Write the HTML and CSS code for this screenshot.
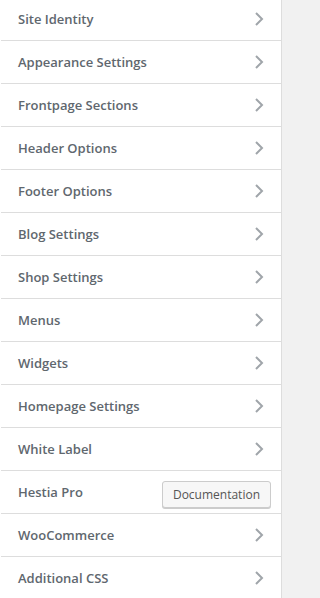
FILE: index.html
```html
<!DOCTYPE html>
<html>
<head>
<meta charset="utf-8">
<link rel="stylesheet" href="styles.css">
</head>
<body>
<div class="panel">
  <ul class="list">
    <li class="row"><span class="title">Site Identity</span><svg class="chev" viewBox="0 0 10 16"><path d="M2 2 L8 8 L2 14" /></svg></li>
    <li class="row"><span class="title">Appearance Settings</span><svg class="chev" viewBox="0 0 10 16"><path d="M2 2 L8 8 L2 14" /></svg></li>
    <li class="row"><span class="title">Frontpage Sections</span><svg class="chev" viewBox="0 0 10 16"><path d="M2 2 L8 8 L2 14" /></svg></li>
    <li class="row"><span class="title">Header Options</span><svg class="chev" viewBox="0 0 10 16"><path d="M2 2 L8 8 L2 14" /></svg></li>
    <li class="row"><span class="title">Footer Options</span><svg class="chev" viewBox="0 0 10 16"><path d="M2 2 L8 8 L2 14" /></svg></li>
    <li class="row"><span class="title">Blog Settings</span><svg class="chev" viewBox="0 0 10 16"><path d="M2 2 L8 8 L2 14" /></svg></li>
    <li class="row"><span class="title">Shop Settings</span><svg class="chev" viewBox="0 0 10 16"><path d="M2 2 L8 8 L2 14" /></svg></li>
    <li class="row"><span class="title">Menus</span><svg class="chev" viewBox="0 0 10 16"><path d="M2 2 L8 8 L2 14" /></svg></li>
    <li class="row"><span class="title">Widgets</span><svg class="chev" viewBox="0 0 10 16"><path d="M2 2 L8 8 L2 14" /></svg></li>
    <li class="row"><span class="title">Homepage Settings</span><svg class="chev" viewBox="0 0 10 16"><path d="M2 2 L8 8 L2 14" /></svg></li>
    <li class="row"><span class="title">White Label</span><svg class="chev" viewBox="0 0 10 16"><path d="M2 2 L8 8 L2 14" /></svg></li>
    <li class="row"><span class="title">Hestia Pro</span><button class="doc">Documentation</button></li>
    <li class="row"><span class="title">WooCommerce</span><svg class="chev" viewBox="0 0 10 16"><path d="M2 2 L8 8 L2 14" /></svg></li>
    <li class="row"><span class="title">Additional CSS</span><svg class="chev" viewBox="0 0 10 16"><path d="M2 2 L8 8 L2 14" /></svg></li>
  </ul>
</div>
</body>
</html>
```
FILE: styles.css
```css
html, body {
  margin: 0;
  padding: 0;
  background: #f1f1f1;
  overflow: hidden;
}
.panel {
  width: 281px;
  height: 598px;
  background: #ffffff;
  border-right: 1px solid #dddddd;
  overflow: hidden;
}
.list {
  list-style: none;
  margin: -2px 0 0 0;
  padding: 0;
}
.row {
  display: flex;
  align-items: center;
  justify-content: space-between;
  height: 42px;
  padding: 0 18px 0 17px;
  border-bottom: 1px solid #dddddd;
  margin-left: 1px;
  box-sizing: content-box;
  font-family: "Open Sans", "Noto Sans", sans-serif;
  font-size: 13px;
  font-weight: 600;
  color: #60676e;
}
.chev {
  width: 10px;
  height: 16px;
  margin-right: -1px;
  fill: none;
  stroke: #a0a5aa;
  stroke-width: 2;
}
.doc {
  font-family: "Open Sans", "Noto Sans", sans-serif;
  font-size: 12px;
  font-weight: 400;
  color: #555555;
  background: #f7f7f7;
  border: 1px solid #cccccc;
  border-radius: 3px;
  box-shadow: 0 1px 0 #cccccc;
  height: 27px;
  padding: 0 10px;
  margin-top: 5px;
  margin-right: -8px;
}
```
